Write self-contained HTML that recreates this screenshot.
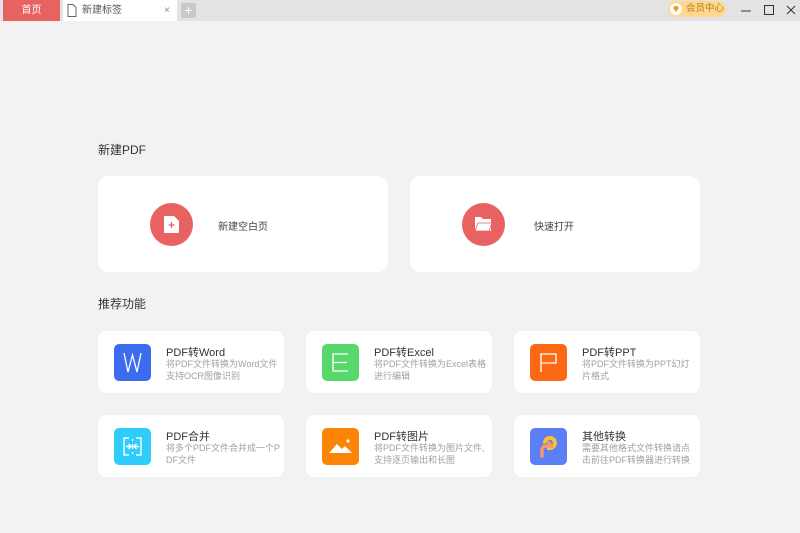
<!DOCTYPE html>
<html><head><meta charset="utf-8"><style>
*{margin:0;padding:0;box-sizing:border-box}
body{width:800px;height:533px;background:#f2f2f2;font-family:"Liberation Sans","Noto Sans CJK SC",sans-serif;position:relative;overflow:hidden}
.bar{position:absolute;left:0;top:0;width:800px;height:21px;background:#e3e3e6}
.home{position:absolute;left:3px;top:0;width:57px;height:21px;background:#e86262;color:#fff;font-size:10px;text-align:center;line-height:21px}
.tab{position:absolute;left:63px;top:0;width:114px;height:21px;background:#fff;font-size:10px;color:#555;line-height:21px}
.plus{position:absolute;left:181px;top:3px;width:15px;height:15px;background:#c9c9cc;border-radius:2px;color:#fff;font-size:14px;line-height:14px;text-align:center}
.vip{position:absolute;left:668px;top:1px;width:58px;height:16px;background:#fcd98e;border-radius:8px;font-size:9.5px;color:#c07b10;line-height:16px;padding-left:18px}
.abs{position:absolute}
.h{position:absolute;left:98px;font-size:12px;color:#333}
.big{position:absolute;top:176px;width:290px;height:96px;background:#fff;border-radius:10px}
.circ{position:absolute;top:27px;width:43px;height:43px;border-radius:50%;background:#e86262}
.card{position:absolute;width:186px;height:62px;background:#fff;border-radius:8px}
.ic{position:absolute;left:16px;top:13px;width:37px;height:37px;border-radius:5px}
.t{position:absolute;left:68px;top:13px;font-size:11px;color:#333}
.d{position:absolute;left:68px;top:27px;width:116px;font-size:9px;line-height:12px;color:#a0a0a0;word-break:break-all}
</style></head><body>
<div class="bar"></div>
<div class="home">首页</div>
<div class="tab"><svg class="abs" style="left:4px;top:4px" width="10" height="13"><path d="M1 .5h5l3 3v9H1z" fill="none" stroke="#666"/></svg><span style="position:absolute;left:19px">新建标签</span><span style="position:absolute;left:101px;color:#888">×</span></div>
<div class="plus">+</div>
<div class="vip"><svg class="abs" style="left:2px;top:2px" width="12" height="12"><circle cx="6" cy="6" r="6" fill="#fff"/><path d="M3 5l1.5-2h3L9 5 6 9z" fill="#f0a020"/></svg>会员中心</div>
<svg class="abs" style="left:736px;top:3px" width="60" height="14"><path d="M5 8h10" stroke="#333"/><rect x="28.5" y="2.5" width="9" height="9" fill="none" stroke="#333"/><path d="M51 3l8 8M59 3l-8 8" stroke="#333"/></svg>

<div class="h" style="top:141px">新建PDF</div>
<div class="big" style="left:98px"><div class="circ" style="left:52px"><svg class="abs" style="left:13px;top:12px" width="17" height="19"><path d="M1 2a1 1 0 011-1h9l5 5v11a1 1 0 01-1 1H2a1 1 0 01-1-1z" fill="#fff"/><path d="M8.5 7v6M5.5 10h6" stroke="#e86262" stroke-width="1.3"/></svg></div><div class="abs" style="left:120px;top:42px;font-size:10px;color:#444">新建空白页</div></div>
<div class="big" style="left:410px"><div class="circ" style="left:52px"><svg class="abs" style="left:12px;top:13px" width="19" height="16"><path d="M1 1h6l2 2h8v12H1z" fill="#fff"/><path d="M1 15l3-8h14l-3 8z" fill="#fff" stroke="#e86262" stroke-width=".8"/></svg></div><div class="abs" style="left:124px;top:42px;font-size:10px;color:#444">快速打开</div></div>

<div class="h" style="top:295px">推荐功能</div>

<div class="card" style="left:98px;top:331px"><div class="ic" style="background:#3d6bf0"><svg width="37" height="37"><path d="M10 9l4 19 4.5-17 4.5 17 4-19" fill="none" stroke="#fff" stroke-width="1.3"/></svg></div><div class="t">PDF转Word</div><div class="d">将PDF文件转换为Word文件支持OCR图像识别</div></div>
<div class="card" style="left:306px;top:331px"><div class="ic" style="background:#56d96a"><svg width="37" height="37"><path d="M26 10H11v17h15M11 18.5h14" fill="none" stroke="#fff" stroke-width="1.3"/></svg></div><div class="t">PDF转Excel</div><div class="d">将PDF文件转换为Excel表格进行编辑</div></div>
<div class="card" style="left:514px;top:331px"><div class="ic" style="background:#fc6816"><svg width="37" height="37"><path d="M11 28V10h15v9H11" fill="none" stroke="#fff" stroke-width="1.3"/></svg></div><div class="t">PDF转PPT</div><div class="d">将PDF文件转换为PPT幻灯片格式</div></div>

<div class="card" style="left:98px;top:415px"><div class="ic" style="background:#2fcdfb"><svg width="37" height="37"><path d="M15 10h-5v17h5M22 10h5v17h-5M12 18.5h5M14.5 16l2.5 2.5-2.5 2.5M25 18.5h-5M22.5 16L20 18.5l2.5 2.5M18.5 11v2M18.5 16v5M18.5 24v2" fill="none" stroke="#fff" stroke-width="1.4"/></svg></div><div class="t">PDF合并</div><div class="d">将多个PDF文件合并成一个PDF文件</div></div>
<div class="card" style="left:306px;top:415px"><div class="ic" style="background:#fc8407"><svg width="37" height="37"><path d="M7 25l8-9 5 5 3-3 7 7z" fill="#fff"/><circle cx="26" cy="13" r="1.6" fill="#fff"/></svg></div><div class="t">PDF转图片</div><div class="d">将PDF文件转换为图片文件,支持逐页输出和长图</div></div>
<div class="card" style="left:514px;top:415px"><div class="ic" style="background:#5b7ff5"><svg width="37" height="37"><path d="M13 16a7 7 0 1 1 7 6h-3v-4h3a3 3 0 1 0-3-3z" fill="#fbc02d"/><path d="M12 28v-6a4 4 0 0 1 4-4h5l-2-3" fill="none" stroke="#f59a6a" stroke-width="3.5" stroke-linecap="round"/></svg></div><div class="t">其他转换</div><div class="d">需要其他格式文件转换请点击前往PDF转换器进行转换</div></div>
</body></html>
